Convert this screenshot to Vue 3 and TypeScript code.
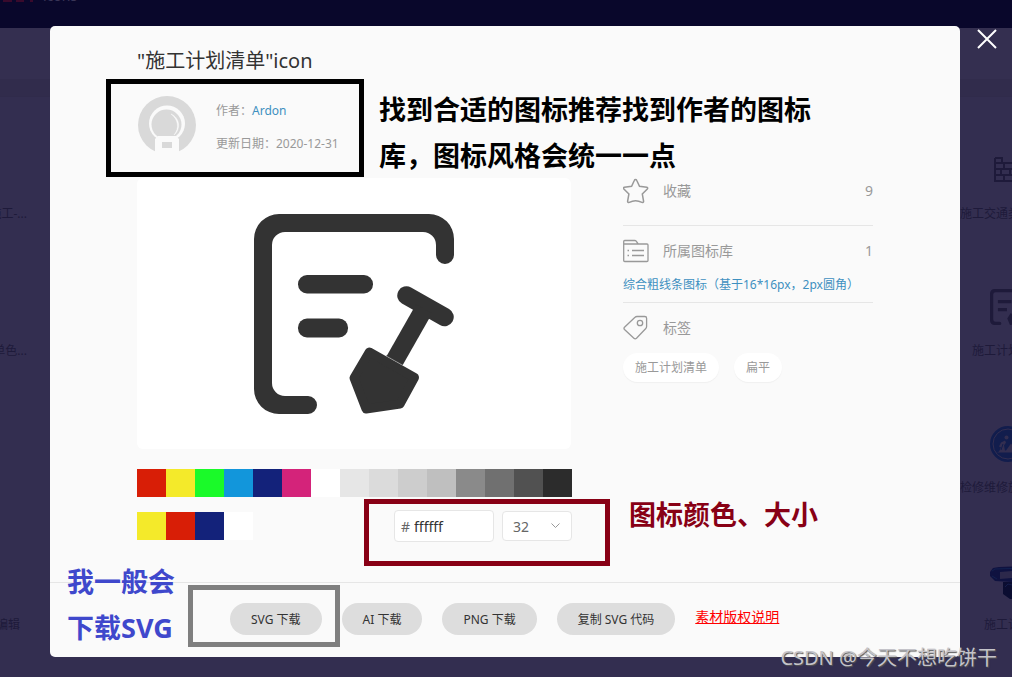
<script setup lang="ts">
import { ref } from 'vue'

const palette: string[] = [
  '#d81e06', '#f4ea2a', '#1afa29', '#1296db', '#13227a', '#d4237a', '#ffffff', '#e6e6e6',
  '#dbdbdb', '#cdcdcd', '#bfbfbf', '#8a8a8a', '#707070', '#515151', '#2c2c2c',
]
const recent: string[] = ['#f4ea2a', '#d81e06', '#13227a', '#ffffff']
const tags: string[] = ['施工计划清单', '扁平']
const downloads: string[] = ['SVG 下载', 'AI 下载', 'PNG 下载', '复制 SVG 代码']
const leftLabels: string[] = ['施工-...', '单色...', '', '编辑']

const color = ref('ffffff')
const size = ref('32')
</script>

<template>
  <div class="page">
    <div class="backdrop" aria-hidden="true">
      <div class="topbar">
        <svg class="brand" width="32" height="14" viewBox="0 0 32 14">
          <path d="M0 10h9v3H0zM13 10h8v3h-8zM27 10h3v3h-3z" fill="#3a0a2c" />
        </svg>
        <span>icons</span>
      </div>
      <div class="band"></div>
      <div class="column column-left">
        <div v-for="(label, i) in leftLabels" :key="i" class="cell">
          <div class="cell-icon"></div>
          <span>{{ label }}</span>
        </div>
      </div>
      <div class="column column-right">
        <div class="cell cell-long">
          <svg class="cell-icon" viewBox="0 0 36 36">
            <path d="M5 6h7v5h24M5 6v23h31M5 11h7M5 17h31M5 23h31M14 11v6M24 11v6M11 17v6M20 17v6M14 23v6M26 23v6" fill="none" stroke="#1e1a3a" stroke-width="2" />
          </svg>
          <span>施工交通类...</span>
        </div>
        <div class="cell">
          <svg class="cell-icon" viewBox="0 0 200 200">
            <path d="M25 0H175A25 25 0 0 1 200 25V41A9 9 0 0 1 182 41V31A13 13 0 0 0 169 18H31A13 13 0 0 0 18 31V169A13 13 0 0 0 31 182H54A9 9 0 0 1 54 200H25A25 25 0 0 1 0 175V25A25 25 0 0 1 25 0ZM44 61h75v18H44zM44 105h50v18H44zM115 134l50 30-18 30-36 6-15-36z" fill="#1e1a3a" />
          </svg>
          <span>施工计划清单</span>
        </div>
        <div class="cell cell-long">
          <svg class="cell-icon" viewBox="0 0 36 36">
            <circle cx="18" cy="18" r="17" fill="#121d4d" stroke="#121d4d" stroke-width="2" />
            <circle cx="18" cy="18" r="15" fill="none" stroke="#332e50" />
            <circle cx="16.500" cy="11.500" r="2" fill="#332e50" />
            <path d="M7 26.500h22l-8-9-5 7h-1l-1-5 2-3-1-2-4 2-2 4 2 1-2 4z" fill="#332e50" />
            <path d="M13 18l-2 6" stroke="#121d4d" />
          </svg>
          <span>检修维修施...</span>
        </div>
        <div class="cell">
          <svg class="cell-icon" viewBox="0 0 36 36">
            <path d="M0 9l3-4 6-1 27-1v14l-14 2-17-1-5-5z" fill="#0f1240" />
            <path d="M10 9l26-2v7l-26 2z" fill="#2c284b" />
            <path d="M2 8l3-2 30-1M2 13l5 3" stroke="#12204f" fill="none" />
            <path d="M13 19h23v17H20l-7-5z" fill="#0b0d31" />
            <path d="M15 24l3-3 8 2v12" fill="none" stroke="#141d4c" />
          </svg>
          <span>施工计划</span>
        </div>
      </div>
    </div>

    <button class="close" type="button" aria-label="关闭">
      <svg width="20" height="20" viewBox="0 0 20 20">
        <path d="M1 1l18 18M19 1L1 19" stroke="#fff" stroke-width="2" />
      </svg>
    </button>

    <main class="modal" role="dialog" aria-labelledby="dialog-title">
      <div class="content">
        <h1 id="dialog-title">"施工计划清单"icon</h1>
        <div class="author">
          <svg class="avatar" width="58" height="58" viewBox="0 0 58 58">
            <circle cx="29" cy="29" r="29" fill="#d9d9d9" />
            <circle cx="29" cy="27.500" r="18" fill="#fafafa" />
            <circle cx="28.500" cy="28.500" r="15" fill="#d9d9d9" />
            <path d="M33 18c9 4 10 15 3 21 6-7 4-16-3-21z" fill="#fafafa" stroke="#fafafa" stroke-width=".5" />
            <path d="M20 40h18l3 3v15H17V43z" fill="#fafafa" />
            <path d="M24 46h10v6H24z" fill="#d9d9d9" />
          </svg>
          <div class="meta">
            <span>作者：<a href="#author">Ardon</a></span>
            <span>更新日期：2020-12-31</span>
          </div>
        </div>

        <div class="columns">
          <div class="editor">
            <div class="preview">
              <svg width="200" height="200" viewBox="0 0 200 200" role="img" aria-label="施工计划清单">
                <g fill="#333">
                  <path d="M25 0H175A25 25 0 0 1 200 25V41A9 9 0 0 1 182 41V31A13 13 0 0 0 169 18H31A13 13 0 0 0 18 31V169A13 13 0 0 0 31 182H54A9 9 0 0 1 54 200H25A25 25 0 0 1 0 175V25A25 25 0 0 1 25 0Z" />
                  <rect x="44" y="61" width="75" height="18.500" rx="9" />
                  <rect x="44" y="104.500" width="50" height="19" rx="9" />
                  <path d="M115.300 138L160.500 163.500 146 190 112 195 100 164z" stroke="#333" stroke-width="9" stroke-linejoin="round" />
                </g>
                <g fill="none" stroke="#333">
                  <path d="M152.500 81.500L190.500 103" stroke-width="18.500" stroke-linecap="round" />
                  <path d="M170 95L140.700 146.500" stroke-width="18.500" />
                </g>
                <path d="M132 141.500L148.500 151" stroke="#555" stroke-width=".5" />
              </svg>
            </div>
            <div class="palette">
              <button v-for="c in palette" :key="c" class="swatch" type="button" :aria-label="c" :style="{ background: c }"></button>
            </div>
            <div class="controls">
              <div class="palette recent">
                <button v-for="c in recent" :key="c" class="swatch" type="button" :aria-label="c" :style="{ background: c }"></button>
              </div>
              <label class="hex"><span>#</span><input v-model="color" type="text" aria-label="颜色" /></label>
              <div class="size">
                <select v-model="size" aria-label="大小">
                  <option>16</option>
                  <option>32</option>
                  <option>64</option>
                </select>
                <svg width="9" height="6" viewBox="0 0 9 6">
                  <path d="M.5 .5l4 4 4-4" fill="none" stroke="#999" />
                </svg>
              </div>
            </div>
          </div>

          <aside class="info">
            <section>
              <div class="row">
                <svg width="26" height="26" viewBox="0 0 26 26">
                  <path d="M12.500 1.500q.9 0 1.300 1l2.700 5.700 7.300 1q1.500.5.500 1.900L19.300 16l1.300 7.300q-.2 1.600-1.700 1.100Q12.500 21 6.300 24.400q-1.500.5-1.700-1.100L5.900 16 .9 11.100Q-.1 9.700 1.400 9.200l7.200-1 2.700-5.700q.4-1 1.200-1z" fill="none" stroke="#999" stroke-width="1.500" />
                </svg>
                <span>收藏</span><span class="count">9</span>
              </div>
            </section>
            <section class="library">
              <div class="row">
                <svg width="26" height="26" viewBox="0 0 26 26">
                  <path d="M.7 22.500V3.500q0-1 1-1h10q1 0 1.500.7l2 2.800h8.800q1 0 1 1v15.500q0 1-1 1H1.700q-1 0-1-1zM.7 6H16M4.500 12.500h1.500M4.500 17.500h1.500M9 12.500h12M9 17.500h12" fill="none" stroke="#999" stroke-width="1.300" />
                </svg>
                <span>所属图标库</span><span class="count">1</span>
              </div>
              <a class="library-link" href="#library">综合粗线条图标（基于16*16px，2px圆角）</a>
            </section>
            <section>
              <div class="row">
                <svg width="26" height="26" viewBox="0 0 26 26">
                  <path d="M12 2.300q.8-.8 2-.8h7.800q1.800 0 1.800 1.800v8.200q0 1.200-.8 2L13.500 23.300q-1.300 1.200-2.600 0L1.500 14.500q-1-1.100 0-2.300z" fill="none" stroke="#999" stroke-width="1.300" />
                  <circle cx="17" cy="8" r="2.700" fill="none" stroke="#999" stroke-width="1.300" />
                </svg>
                <span>标签</span>
              </div>
              <div class="tags">
                <a v-for="t in tags" :key="t" href="#tag">{{ t }}</a>
              </div>
            </section>
          </aside>
        </div>
      </div>

      <footer>
        <button v-for="d in downloads" :key="d" type="button">{{ d }}</button>
        <a href="#copyright">素材版权说明</a>
      </footer>

      <div class="frame frame-author"></div>
      <div class="frame frame-controls"></div>
      <div class="frame frame-download"></div>
      <p class="note note-author">找到合适的图标推荐找到作者的图标<br />库，图标风格会统一一点</p>
      <p class="note note-controls">图标颜色、大小</p>
      <p class="note note-download">我一般会<br />下载SVG</p>
    </main>
    <div class="watermark">CSDN @今天不想吃饼干</div>
  </div>
</template>

<style>
body {
  margin: 0;
  background: #332e50;
}
</style>

<style scoped>
* {
  box-sizing: border-box;
}
.page {
  position: relative;
  display: flow-root;
  min-height: 100vh;
  overflow: hidden;
  font-family: 'Noto Sans', 'Noto Sans CJK SC', sans-serif;
  font-size: 12px;
  color: #999;
}
button,
input,
select {
  font: inherit;
  margin: 0;
}
button {
  border: 0;
  padding: 0;
  cursor: pointer;
}
a {
  color: #3e90c0;
  text-decoration: none;
}
svg {
  display: block;
  flex: none;
}
.backdrop {
  position: absolute;
  inset: 0;
  overflow: hidden;
  background: #332e50;
  color: #1e1a3a;
}
.topbar {
  display: flex;
  align-items: center;
  gap: 8px;
  height: 64px;
  margin-top: -36px;
  padding-left: 3px;
  background: #09072b;
  color: #3a3557;
  font-size: 14px;
  line-height: 16px;
}
.band {
  height: 69px;
  border-bottom: 1px solid #302b4b;
  background: linear-gradient(#342f50 51px, #312c4c 51px);
}
.column {
  position: absolute;
  top: 152px;
  width: 96px;
}
.column-left {
  left: -69px;
}
.column-right {
  right: -44px;
}
.cell {
  height: 137px;
  text-align: center;
  white-space: nowrap;
  line-height: 20px;
}
.column-left .cell {
  text-align: right;
}
.column-left .cell:last-child {
  padding-right: 7px;
}
.cell-long {
  text-align: left;
}
.cell-icon {
  width: 36px;
  height: 36px;
  margin: 0 auto 16px;
}
.close {
  position: absolute;
  top: 29px;
  right: 15px;
  background: none;
}
.modal {
  position: relative;
  margin: 26px 52px 20px 50px;
  border-radius: 5px;
  background: #fafafa;
}
.content {
  padding: 21px 87px 40px;
}
h1 {
  margin: 0;
  font-size: 20px;
  line-height: 28px;
  font-weight: 400;
  color: #333;
}
.author {
  display: flex;
  gap: 20px;
  margin: 21px 0 24px 1px;
}
.meta {
  display: flex;
  flex-direction: column;
  gap: 13px;
  padding-top: 5px;
  line-height: 20px;
}
.columns {
  display: grid;
  grid-template-columns: minmax(0, 1fr) 250px;
  gap: 51px;
}
.preview {
  display: flex;
  align-items: center;
  justify-content: center;
  height: 271px;
  margin-right: 1px;
  border-radius: 6px;
  background: #fff;
}
.palette {
  display: flex;
  margin-top: 20px;
}
.swatch {
  flex: 1;
  height: 28px;
}
.controls {
  display: flex;
  align-items: center;
  gap: 8px;
  margin-top: 13px;
}
.recent {
  margin: 0 auto 0 0;
}
.recent .swatch {
  flex: none;
  width: 29px;
}
.hex {
  display: flex;
  align-items: center;
  gap: 4px;
  width: 100px;
  height: 32px;
  padding: 0 6px;
  border: 1px solid #e6e6e6;
  border-radius: 4px;
  background: #fff;
  font-size: 14px;
  color: #666;
}
.hex input {
  width: 100%;
  min-width: 0;
  padding: 0;
  border: 0;
  outline: 0;
  background: none;
  color: #333;
}
.size {
  position: relative;
  width: 70px;
}
.size select {
  display: block;
  width: 100%;
  height: 30px;
  padding: 0 10px;
  border: 1px solid #e6e6e6;
  border-radius: 4px;
  background: #fff;
  appearance: none;
  font-size: 14px;
  color: #666;
}
.size svg {
  position: absolute;
  top: 12px;
  right: 12px;
  pointer-events: none;
}
section {
  padding-bottom: 21px;
}
section + section {
  padding-top: 12px;
  border-top: 1px solid #e6e6e6;
}
section.library {
  padding-bottom: 7px;
}
.row {
  display: flex;
  align-items: center;
  gap: 14px;
  height: 26px;
  font-size: 14px;
}
.row span {
  padding-bottom: 2px;
}
.count {
  margin-left: auto;
}
.library-link {
  display: block;
  margin-top: 11px;
  line-height: 20px;
  white-space: nowrap;
}
.tags {
  display: flex;
  gap: 15px;
  margin-top: 12px;
}
.tags a {
  padding: 0 12px;
  border-radius: 15px;
  background: #fff;
  box-shadow: 0 1px 1px #f0f0f0;
  line-height: 29px;
  color: #999;
}
footer {
  display: flex;
  gap: 20px;
  padding: 20px 20px 22px 180px;
  border-top: 1px solid #e6e6e6;
}
footer button {
  height: 32px;
  padding: 0 21px;
  border-radius: 16px;
  background: #ddd;
  color: #333;
}
footer a {
  font-size: 14px;
  line-height: 28px;
  color: #f00;
  text-decoration: underline;
}
.frame {
  position: absolute;
  border: 5px solid;
  pointer-events: none;
}
.frame-author {
  left: 56px;
  top: 53px;
  width: 258px;
  height: 98px;
  color: #000;
}
.frame-controls {
  left: 314px;
  top: 473px;
  width: 246px;
  height: 67px;
  color: #880015;
}
.frame-download {
  left: 138px;
  top: 559px;
  width: 152px;
  height: 62px;
  color: #7f7f7f;
}
.note {
  position: absolute;
  margin: 0;
  font-size: 27px;
  line-height: 46px;
  font-weight: 700;
  white-space: nowrap;
}
.note-author {
  left: 329px;
  top: 61px;
  color: #000;
}
.note-controls {
  left: 579px;
  top: 466px;
  color: #880015;
}
.note-download {
  left: 17px;
  top: 533px;
  color: #3f48cc;
}
.watermark {
  position: absolute;
  right: 15px;
  bottom: 5px;
  font-size: 20px;
  line-height: 28px;
  color: #c4c3c9;
  text-shadow: 1px 1px 1px #555;
}
</style>
